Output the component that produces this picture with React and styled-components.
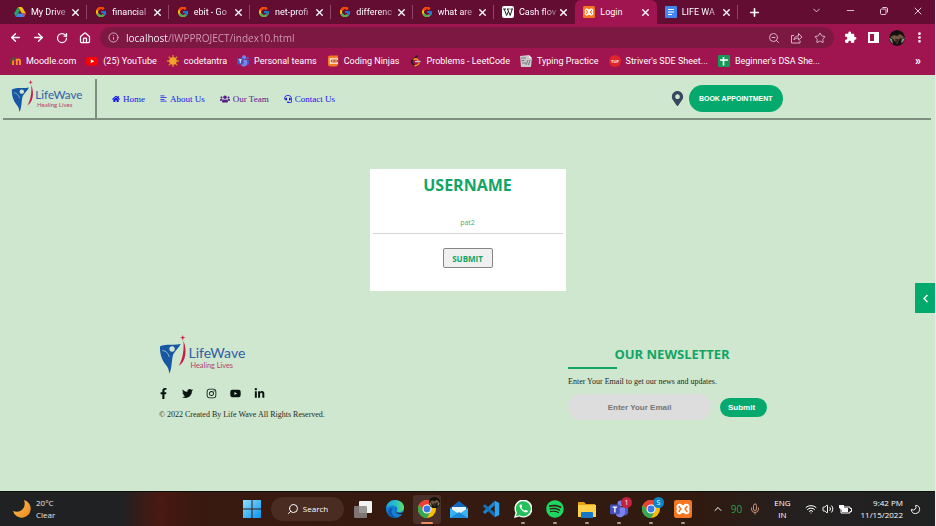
import React from "react";
import styled, { createGlobalStyle, css } from "styled-components";
import { FcGoogle } from "react-icons/fc";
import { MdExtension } from "react-icons/md";
import {
  FaHome,
  FaAlignLeft,
  FaUsers,
  FaHeadset,
  FaMapMarkerAlt,
  FaFacebookF,
  FaTwitter,
  FaInstagram,
  FaYoutube,
  FaLinkedinIn,
  FaChevronLeft,
  FaSpotify,
} from "react-icons/fa";
import {
  X,
  Plus,
  ChevronDown,
  ChevronUp,
  Minus,
  ArrowLeft,
  ArrowRight,
  RotateCw,
  House,
  Info,
  ZoomOut,
  Star,
  EllipsisVertical,
  Search,
  Mic,
  Wifi,
  Volume2,
  Moon,
} from "lucide-react";

const uiFont = '"Open Sans", "Noto Sans", sans-serif';
const compactFont = 'Roboto, "Noto Sans", sans-serif';
const green = "#04aa6d";

const GlobalStyle = createGlobalStyle`
  *, *::before, *::after { box-sizing: border-box; }
  body { margin: 0; background: #cfe6cf; }
  button, input { font: inherit; margin: 0; }
  svg { display: block; flex: none; }
`;

const Screen = styled.div`
  display: flex;
  flex-direction: column;
  min-height: 100vh;
  overflow-x: hidden;
  border-right: 1px solid #f1e6ea;
  font-family: ${uiFont};
  font-size: 10px;
`;

/* Browser chrome */

const TabStrip = styled.div`
  display: flex;
  align-items: stretch;
  height: 24px;
  padding-left: 6px;
  background: #640d33;
  color: #fff;
  font-family: ${compactFont};
  font-size: 9px;
`;

const TabList = styled.div`
  display: flex;
  flex: 0 1 732px;
  min-width: 0;
`;

const Tab = styled.div`
  display: flex;
  flex: 1 1 0;
  align-items: center;
  min-width: 0;
  padding: 0 6px 0 8px;
  position: relative;
  ${(p) =>
    p.$active
      ? css`
          background: #a01450;
          border-radius: 6px 6px 0 0;
        `
      : css`
          &::after {
            content: "";
            position: absolute;
            right: 0;
            top: 5px;
            width: 1px;
            height: 14px;
            background: ${p.$divider ? "#8f4765" : "transparent"};
          }
        `}
`;

const PlainButton = styled.button`
  display: flex;
  align-items: center;
  justify-content: center;
  padding: 0;
  border: 0;
  background: none;
  color: inherit;
`;

const TabButton = styled(PlainButton)`
  flex: 1;
  min-width: 0;
  justify-content: flex-start;
  gap: 5px;
`;

const TabLabel = styled.span`
  flex: 1;
  min-width: 0;
  text-align: left;
  white-space: nowrap;
  line-height: 16px;
  ${(p) => p.$fade && css`mask-image: linear-gradient(90deg, #000 60%, rgba(0, 0, 0, 0.25) 100%);`}
`;

const NewTab = styled(PlainButton)`
  width: 32px;
`;

const WindowControls = styled.div`
  display: flex;
  margin-left: auto;
  align-items: center;
  padding-bottom: 3px;
  color: #e2cbd5;
`;

const WindowButton = styled(PlainButton)`
  width: 34px;
  height: 20px;
`;

const Toolbar = styled.div`
  display: flex;
  align-items: center;
  height: 27px;
  padding: 0 4px;
  background: #a01450;
  color: #fff;
`;

const ToolButton = styled(PlainButton)`
  width: 23px;
  height: 20px;
`;

const AddressBar = styled.label`
  display: flex;
  flex: 1;
  align-items: center;
  height: 21px;
  margin: 0 5px 0 4px;
  padding: 0 3px 0 8px;
  border-radius: 11px;
  background: #7d1843;
  color: #d9b3c4;
`;

const AddressInput = styled.input`
  flex: 1;
  min-width: 0;
  padding: 0 0 0 7px;
  border: 0;
  outline: 0;
  font-size: 10px;
  line-height: 16px;
  color: transparent;
  background: linear-gradient(90deg, #fff 49px, #d3a0b6 49px);
  background-clip: text;
  -webkit-background-clip: text;
`;

const Avatar = styled.span`
  width: 16px;
  height: 16px;
  border-radius: 50%;
  overflow: hidden;
`;

const BookmarkBar = styled.nav`
  display: flex;
  align-items: center;
  gap: 10px;
  height: 24px;
  padding: 0 14px 4px 9px;
  background: #a01450;
  color: #fff;
  font-family: ${compactFont};
  font-size: 9px;
  white-space: nowrap;
`;

const Bookmark = styled.a`
  display: flex;
  align-items: center;
  gap: 5px;
  color: inherit;
  text-decoration: none;
  line-height: 16px;
`;

const MoreBookmarks = styled(PlainButton)`
  margin-left: auto;
  font-size: 12px;
  font-weight: 700;
`;

/* Page */

const Page = styled.div`
  position: relative;
  flex: 1;
  display: flex;
  flex-direction: column;
  background: #cfe6cf;
  font-family: "Liberation Serif", serif;
`;

const SiteHeader = styled.header`
  display: flex;
  align-items: center;
  height: 45px;
  margin: 0 4px 0 3px;
  padding-top: 4px;
  border-bottom: 2px solid #7e8f7f;
`;

const HeaderLogo = styled.a`
  display: flex;
  align-items: center;
  align-self: stretch;
  padding: 0 12px 4px 8px;
  border-right: 2px solid #7e8f7f;
`;

const SiteNav = styled.nav`
  display: flex;
  gap: 15px;
  padding-left: 15px;
`;

const NavLink = styled.a`
  display: flex;
  align-items: center;
  gap: 3px;
  font-size: 9px;
  line-height: 12px;
  color: ${(p) => (p.$visited ? "#551a8b" : "#1414ee")};
  text-decoration: none;
`;

const Booking = styled.div`
  display: flex;
  align-items: center;
  gap: 4px;
  margin-left: auto;
  margin-right: 16%;
  color: #34495e;
`;

const BookButton = styled.button`
  height: 27px;
  padding: 0 10px;
  border: 0;
  border-radius: 14px;
  background: ${green};
  color: #fff;
  font: bold 7px "Liberation Sans", sans-serif;
`;

const LoginCard = styled.form`
  display: flex;
  flex-direction: column;
  align-items: center;
  align-self: center;
  width: 196px;
  margin-top: 49px;
  padding: 4px 3px 23px;
  background: #fff;
  color: #11a566;
  font-family: ${uiFont};
`;

const CardTitle = styled.label`
  font-size: 16px;
  font-weight: 700;
  line-height: 24px;
`;

const UserInput = styled.input`
  width: 100%;
  height: 23px;
  margin-top: 14px;
  padding: 0;
  border: 0;
  border-bottom: 1px solid #d3d8d3;
  outline: 0;
  background: none;
  color: #3fae72;
  font-size: 7px;
  text-align: center;
`;

const CardSubmit = styled.button`
  width: 50px;
  height: 20px;
  margin-top: 14px;
  padding: 0;
  border: 1px solid #858585;
  border-radius: 2px;
  background: #efefef;
  color: #11a566;
  font-size: 8px;
  font-weight: 700;
`;

const SideToggle = styled.button`
  position: absolute;
  right: 0;
  top: 208px;
  display: flex;
  align-items: center;
  justify-content: center;
  width: 20px;
  height: 30px;
  padding: 0;
  border: 0;
  background: ${green};
  color: #fff;
`;

const SiteFooter = styled.footer`
  display: flex;
  justify-content: space-between;
  margin-top: 44px;
  padding: 0 17% 24px;
  color: #1d2b22;
`;

const FooterBrand = styled.div`
  display: flex;
  flex-direction: column;
`;

const SocialRow = styled.div`
  display: flex;
  align-items: center;
  gap: 13px;
  margin: 14px 0 0 -1px;
  color: #0a1410;
`;

const SocialLink = styled.a`
  color: inherit;
`;

const SmallText = styled.p`
  margin: ${(p) => p.$top}px 0 0;
  font-size: 8px;
  line-height: 12px;
`;

const Newsletter = styled.form`
  flex: 0 0 208px;
  padding-top: 9px;
`;

const NewsTitle = styled.h2`
  margin: 0;
  font: 700 13px/20px ${uiFont};
  text-align: center;
  color: #11a566;
`;

const TitleRule = styled.div`
  width: 49px;
  height: 2px;
  margin-top: 3px;
  background: #11a566;
`;

const NewsRow = styled.div`
  display: flex;
  align-items: center;
  gap: 9px;
  margin-top: 6px;
`;

const EmailInput = styled.input`
  width: 143px;
  height: 26px;
  padding: 0 8px;
  border: 0;
  border-radius: 13px;
  background: #dddddd;
  font: bold 8px "Liberation Sans", sans-serif;
  text-align: center;
  &::placeholder { color: #757575; }
`;

const NewsSubmit = styled.button`
  width: 47px;
  height: 19px;
  padding: 0 4px 0 0;
  border: 0;
  border-radius: 10px;
  background: ${green};
  color: #fff;
  font: bold 8px "Liberation Sans", sans-serif;
`;

/* Taskbar */

const Taskbar = styled.footer`
  display: grid;
  grid-template-columns: 1fr auto 1fr;
  align-items: center;
  height: 35px;
  border-top: 1px solid #101010;
  background: linear-gradient(90deg, #202122 0 13%, #4a1811 17%, #38190f 21%, #351a10 45%, #301a10 75%, #242020 85%, #202122 100%);
  color: #fff;
  font-size: 8px;
  line-height: 12px;
`;

const Weather = styled.div`
  display: flex;
  align-items: center;
  gap: 5px;
  padding-left: 13px;
  color: #e8e8e8;
`;

const AppRow = styled.div`
  display: flex;
  align-items: center;
  gap: 4px;
`;

const AppButton = styled(PlainButton)`
  position: relative;
  width: 28px;
  height: 29px;
  border-radius: 3px;
  background: ${(p) => (p.$active ? "#4b3029" : "none")};
  &::after {
    content: "";
    position: absolute;
    bottom: 0;
    left: 50%;
    width: ${(p) => (p.$active ? 12 : 4)}px;
    height: 2px;
    border-radius: 1px;
    transform: translateX(-50%);
    background: ${(p) => (p.$active ? "#ef8b62" : p.$open ? "#a39a96" : "transparent")};
  }
`;

const Badge = styled.span`
  position: absolute;
  top: 2px;
  right: 1px;
  width: 11px;
  height: 11px;
  border-radius: 50%;
  background: ${(p) => p.$color};
  color: #fff;
  font-size: 7px;
  line-height: 11px;
  overflow: hidden;
`;

const SearchButton = styled(PlainButton)`
  width: 73px;
  height: 24px;
  margin: 0 1px;
  gap: 4px;
  border-radius: 12px;
  background: #4a2c23;
  font-size: 8px;
`;

const Mirrored = styled.span`
  transform: scaleX(-1);
`;

const Tray = styled.div`
  display: flex;
  align-items: center;
  justify-content: flex-end;
  gap: 7px;
  padding-right: 14px;
`;

const TrayText = styled.div`
  text-align: ${(p) => p.$align || "center"};
  white-space: nowrap;
`;

const TrayStat = styled.span`
  color: #23a244;
  font-size: 10px;
`;

const StatusGroup = styled.div`
  display: flex;
  align-items: center;
  gap: 5px;
  margin: 0 2px 0 7px;
`;

const TrayGroup = styled.div`
  display: flex;
  align-items: center;
  gap: 7px;
  margin-right: 6px;
`;

/* Drawings */

const DriveIcon = () => (
  <svg width="12" height="12" viewBox="0 0 24 24">
    <path d="M8 2h8l8 13h-8z" fill="#fbbc04" />
    <path d="M8 2l4 7L4 22 0 15z" fill="#1ea362" />
    <path d="M8 15h16l-4 7H4z" fill="#4285f4" />
    <path d="M17 15h7l-4 7z" fill="#ea4335" />
  </svg>
);

const WikiIcon = () => (
  <svg width="12" height="12" viewBox="0 0 12 12">
    <rect width="12" height="12" rx="2" fill="#fff" />
    <path d="M1 3h3M5 3h2.500M8.500 3H11M2.200 3l2.400 6.500L6.300 5.500M5.500 3l2.700 6.500L10.200 3" fill="none" stroke="#222" strokeWidth="1" />
  </svg>
);

const XamppIcon = ({ size }) => (
  <svg width={size} height={size} viewBox="0 0 24 24">
    <rect width="24" height="24" rx="3" fill="#f37623" />
    <path d="M8 8c4 0 4 8 8 8M16 8c-4 0-4 8-8 8" fill="none" stroke="#fff" strokeWidth="2.500" />
    <path d="M10 7.500C9 5.500 4.500 6 4.500 9c0 2 1.500 3 3 3-1.500 0-3 1-3 3 0 3 4.500 3.500 5.500 1.500M14 7.500c1-2 5.500-1.500 5.500 1.500 0 2-1.500 3-3 3 1.500 0 3 1 3 3 0 3-4.500 3.500-5.500 1.500M9 8h6M9 16h6" fill="none" stroke="#fff" strokeWidth="2.500" />
  </svg>
);

const DocsIcon = () => (
  <svg width="12" height="12" viewBox="0 0 12 12">
    <rect width="12" height="12" rx="1" fill="#4285f4" />
    <path d="M3 3.500h6M3 6h6M3 8.500h4" stroke="#fff" strokeWidth="1.200" />
  </svg>
);

const SheetIcon = () => (
  <svg width="12" height="12" viewBox="0 0 12 12">
    <rect width="12" height="12" rx="1" fill="#159a56" />
    <path d="M2 5h8M5.500 2v8.500" stroke="#fff" strokeWidth="1.600" />
  </svg>
);

const MoodleIcon = () => (
  <svg width="12" height="12" viewBox="0 0 12 12">
    <path d="M4 10V6a1.900 1.900 0 0 1 3.800 0v4M7.800 10V6a1.600 1.600 0 0 1 3.200 0v4" fill="none" stroke="#f7931e" strokeWidth="1.900" />
    <path d="M0 5l5-3 2 2-5 1.500zM1.500 5v5" fill="#63453f" stroke="#63453f" />
  </svg>
);

const YouTubeIcon = () => (
  <svg width="12" height="12" viewBox="0 0 12 12">
    <rect y="2" width="12" height="8.500" rx="2.200" fill="#f00" />
    <path d="M4.800 4.300v4l3.400-2z" fill="#fff" />
  </svg>
);

const SunIcon = () => (
  <svg width="12" height="12" viewBox="0 0 12 12">
    <path d="M6 0v12M0 6h12M1.800 1.800l8.400 8.400M10.200 1.800L1.800 10.200" stroke="#d9861c" strokeWidth="1.400" />
    <circle cx="6" cy="6" r="3.700" fill="#f0a22a" />
  </svg>
);

const TeamsIcon = ({ size }) => (
  <svg width={size} height={size} viewBox="0 0 24 24">
    <circle cx="14" cy="4.500" r="4" fill="#7b83eb" />
    <circle cx="21" cy="6" r="2.700" fill="#5059c9" />
    <path d="M17 10h7v7a4 4 0 0 1-6 3z" fill="#5059c9" />
    <path d="M8 9.500h12V17a6.500 6.500 0 0 1-12 3z" fill="#7b83eb" />
    <rect y="6" width="13" height="13" rx="1.500" fill="#4651b8" />
    <path d="M3.500 9.500h6M6.500 9.500v7" stroke="#fff" strokeWidth="1.800" />
  </svg>
);

const NinjaIcon = () => (
  <svg width="12" height="12" viewBox="0 0 13 12">
    <path d="M1 3a3 3 0 0 1 3-3h8v9a3 3 0 0 1-3 3H4a3 3 0 0 1-3-3z" fill="#f47b20" />
    <path d="M3 3h9v6H3z" fill="#fff3e6" />
    <rect x="4" y="4.500" width="8" height="3.200" rx="1.500" fill="#c4511a" />
    <path d="M5.500 6h1.500M9 6h1.500" stroke="#fff" strokeWidth="1.300" />
  </svg>
);

const LeetIcon = () => (
  <svg width="12" height="12" viewBox="0 0 24 24" fill="none" strokeWidth="3" strokeLinecap="round">
    <path d="M14 2L4 12" stroke="#1f1a17" />
    <path d="M18 17l-3 3c-2 2-5 2-7 0l-4-4c-2-2-1-4 0-5" stroke="#1f1a17" />
    <path d="M8 9c3-3 5-2 8 1" stroke="#ffa116" />
    <path d="M11 13h9" stroke="#c9c9c9" />
    <path d="M10 21c2 1 4 0 8-4" stroke="#ffa116" />
  </svg>
);

const TypingIcon = () => (
  <svg width="12" height="12" viewBox="0 0 12 12">
    <path d="M0 1l9-1v3h3l-1 9H1z" fill="#c9c9cb" />
    <path d="M1 3h5M1.500 5.500h3M2 8h4M8 5l-2 5M10 5L8.500 10" stroke="#77777c" />
    <path d="M9 0l3 3H9z" fill="#f4f4f4" />
  </svg>
);

const TufIcon = () => (
  <svg width="12" height="12" viewBox="0 0 12 12">
    <circle cx="6" cy="6" r="6" fill="#e0242c" />
    <text x="6" y="7.500" textAnchor="middle" fontFamily="Liberation Sans" fontSize="4" fontWeight="700" fill="#fff">TUF</text>
  </svg>
);

const ShareIcon = () => (
  <svg width="13" height="12" viewBox="0 0 13 12" fill="none" stroke="currentColor">
    <path d="M4 3.500H1.500v7.500h8.500V8.500M4 8c0-3 2-4 4.500-4V1.500L12 5 8.500 8V6C6.500 6 5 6.500 4 8z" strokeLinejoin="round" />
  </svg>
);

const PanelIcon = () => (
  <svg width="11" height="11" viewBox="0 0 11 11">
    <path d="M0 0h11v11H0zM2 2v7h4V2z" fill="#fff" fillRule="evenodd" />
  </svg>
);

const RestoreIcon = () => (
  <svg width="8" height="8" viewBox="0 0 8 8" fill="none" stroke="currentColor">
    <rect x=".5" y="2" width="5.500" height="5.500" rx="1" />
    <path d="M2.500 .5H6A1.500 1.500 0 0 1 7.500 2v3.500" />
  </svg>
);

const Portrait = ({ size }) => (
  <svg width={size} height={size} viewBox="0 0 16 16">
    <circle cx="8" cy="8" r="8" fill="#15100d" />
    <path d="M1 7l4-2 3 1 3-2 4 3-2 2-2-1-1 3-2-2-2 3-2-3z" fill="#6e5842" />
    <path d="M0 8l3 1 1 5-2-2zM16 8l-3 1-1 4 2-1z" fill="#7d9a80" />
    <path d="M6 9h4l-1 5H7z" fill="#3d2a20" />
  </svg>
);

const ChromeIcon = () => (
  <svg width="18" height="18" viewBox="0 0 24 24">
    <circle cx="12" cy="12" r="12" fill="#fbbc04" />
    <path d="M1.600 6A12 12 0 0 1 22.400 6H12L6.800 15z" fill="#ea4335" />
    <path d="M1.600 6A12 12 0 0 0 12 24l5.200-9H6.800z" fill="#34a853" />
    <circle cx="12" cy="12" r="6" fill="#fff" />
    <circle cx="12" cy="12" r="4.600" fill="#3b78e7" />
  </svg>
);

const EdgeIcon = () => (
  <svg width="18" height="18" viewBox="0 0 24 24">
    <defs>
      <linearGradient id="edgeTop" x1="0" x2="1">
        <stop offset="0" stopColor="#1aa3df" />
        <stop offset=".6" stopColor="#2cc6c0" />
        <stop offset="1" stopColor="#67df5a" />
      </linearGradient>
    </defs>
    <circle cx="12" cy="12" r="12" fill="#1580d6" />
    <path d="M0 11C1 4 6 0 12 0c8 0 12 5 12 10 0 4-3 6-6 6-4 0-4-2-3-3 2-5-8-9-15-2z" fill="url(#edgeTop)" />
    <path d="M9 11c-4 5 0 12 7 12-6 2-12-1-13-7 0-4 3-6 6-5z" fill="#0c59ac" />
    <path d="M14 9.500c-3 2-2 7 3 8 3 0 5-1 6.500-2l-1.500 3c-7 2-12-3-8-9z" fill="#301a10" />
  </svg>
);

const VsCodeIcon = () => (
  <svg width="18" height="18" viewBox="0 0 24 24">
    <path d="M17 1l6 3v16l-6 3z" fill="#2fa3ee" />
    <path d="M17 1v6L4 18.500l-3-2.500z" fill="#1a86d3" />
    <path d="M17 23v-6L4 5.500 1 8z" fill="#1272ba" />
  </svg>
);

const WindowsIcon = () => (
  <svg width="18" height="18" viewBox="0 0 18 18">
    <defs>
      <linearGradient id="win" x2="1" y2="1">
        <stop offset="0" stopColor="#8be0fd" />
        <stop offset="1" stopColor="#0a93ee" />
      </linearGradient>
    </defs>
    <path d="M0 0h8.500v8.500H0zM9.500 0H18v8.500H9.500zM0 9.500h8.500V18H0zM9.500 9.500H18V18H9.500z" fill="url(#win)" />
  </svg>
);

const TaskViewIcon = () => (
  <svg width="18" height="17" viewBox="0 0 18 17">
    <rect x="5" width="13" height="12" rx="1" fill="#f2f2f2" />
    <rect y="5" width="13" height="12" rx="1" fill="#8b8785" fillOpacity=".85" />
  </svg>
);

const MailIcon = () => (
  <svg width="18" height="17" viewBox="0 0 18 17">
    <path d="M0 7l9-7 9 7v10H0z" fill="#1267b8" />
    <path d="M2 6h14v6H2z" fill="#e9f5fd" />
    <path d="M0 7l9 6 9-6v10H0z" fill="#39b2f2" />
    <path d="M0 17l9-6 9 6z" fill="#1c8ad8" />
  </svg>
);

const FolderIcon = () => (
  <svg width="18" height="17" viewBox="0 0 18 17">
    <path d="M0 1h6l2 2h9v13H0z" fill="#e5a012" />
    <path d="M0 4h18v12H0z" fill="#ffd04a" />
    <path d="M3 12q0-1 1-1h10q1 0 1 1v5H3z" fill="#1777c4" />
  </svg>
);

const WhatsAppIcon = () => (
  <svg width="18" height="18" viewBox="0 0 24 24">
    <path d="M0 24L2 17A12 12 0 1 1 7 22z" fill="#fff" />
    <path d="M2.500 21.500L4 17A10 10 0 1 1 7.500 20.300z" fill="#25c05a" />
    <path d="M8 6c-3 3 5 13 10 10 1-1 0-2 0-2l-3-1-1 1c-2 0-4-3-4-4l1-1-1-3z" fill="#fff" />
  </svg>
);

const WeatherMoon = () => (
  <svg width="18" height="18" viewBox="0 0 18 18">
    <defs>
      <linearGradient id="moonFill" x2="1" y2="1">
        <stop offset="0" stopColor="#ffc45c" />
        <stop offset="1" stopColor="#ed861c" />
      </linearGradient>
    </defs>
    <path d="M11 0a9 9 0 1 1-11 11C7 14 14 8 11 0z" fill="url(#moonFill)" />
  </svg>
);

const BatteryIcon = () => (
  <svg width="13" height="11" viewBox="0 0 13 11">
    <path d="M2 3h9v1.500h1.500v3H11V9H2z" fill="none" stroke="#fff" />
    <path d="M3 4h6v4H3zM0 1h5v3L3 6 0 4z" fill="#fff" />
  </svg>
);

const LifeWaveLogo = ({ width }) => (
  <svg width={width} viewBox="0 0 260 117" role="img" aria-label="LifeWave Healing Lives">
    <path d="M3 34C22 25 45 32 65 27C60 38 49 46 43 57C37 71 40 97 31 116C29 103 27 96 20 89C8 75 2 55 3 34Z" fill="#1857a4" />
    <path d="M10 46C21 47 28 55 31 66" fill="none" stroke="#cfe6cf" strokeWidth="2" />
    <circle cx="39" cy="42" r="8" fill="#cfe6cf" />
    <path d="M73 17C85 47 80 80 59 92C72 70 75 43 73 17Z" fill="#c51f48" />
    <path d="M71 0l2 6 6 2-6 2-2 7-2-7-6-2 6-2z" fill="#c51f48" />
    <text x="88" y="68" fontFamily="Lato, sans-serif" fontSize="42" fill="#315fa5">LifeWave</text>
    <text x="94" y="99" fontFamily="Lato, sans-serif" fontSize="22" fill="#b5446a">Healing Lives</text>
  </svg>
);

/* Content */

const tabs = [
  { title: "My Drive", icon: <DriveIcon /> },
  { title: "financial", icon: <FcGoogle size={12} /> },
  { title: "ebit - Go", icon: <FcGoogle size={12} /> },
  { title: "net-profi", icon: <FcGoogle size={12} /> },
  { title: "differenc", icon: <FcGoogle size={12} /> },
  { title: "what are", icon: <FcGoogle size={12} /> },
  { title: "Cash flov", icon: <WikiIcon /> },
  { title: "Login", icon: <XamppIcon size={12} />, active: true },
  { title: "LIFE WA", icon: <DocsIcon /> },
];

const bookmarks = [
  ["Moodle.com", <MoodleIcon />],
  ["(25) YouTube", <YouTubeIcon />],
  ["codetantra", <SunIcon />],
  ["Personal teams", <TeamsIcon size={12} />],
  ["Coding Ninjas", <NinjaIcon />],
  ["Problems - LeetCode", <LeetIcon />],
  ["Typing Practice", <TypingIcon />],
  ["Striver's SDE Sheet...", <TufIcon />],
  ["Beginner's DSA She...", <SheetIcon />],
];

const navLinks = [
  { name: "Home", Icon: FaHome, size: 8 },
  { name: "About Us", Icon: FaAlignLeft, size: 7 },
  { name: "Our Team", Icon: FaUsers, size: 10, visited: true },
  { name: "Contact Us", Icon: FaHeadset, size: 8 },
];

const socials = [
  ["Facebook", FaFacebookF],
  ["Twitter", FaTwitter],
  ["Instagram", FaInstagram],
  ["YouTube", FaYoutube],
  ["LinkedIn", FaLinkedinIn],
];

const apps = [
  { name: "Task view", icon: <TaskViewIcon /> },
  { name: "Edge", icon: <EdgeIcon /> },
  { name: "Chrome", icon: <ChromeIcon />, active: true, badge: <Portrait size={11} />, color: "#15100d" },
  { name: "Mail", icon: <MailIcon /> },
  { name: "VS Code", icon: <VsCodeIcon /> },
  { name: "WhatsApp", icon: <WhatsAppIcon />, open: true },
  { name: "Spotify", icon: <FaSpotify size={18} color="#1ed760" />, open: true },
  { name: "Explorer", icon: <FolderIcon />, open: true },
  { name: "Teams", icon: <TeamsIcon size={18} />, open: true, badge: "1", color: "#c4223e" },
  { name: "Chrome profile", icon: <ChromeIcon />, open: true, badge: "S", color: "#0b87c9" },
  { name: "XAMPP", icon: <XamppIcon size={18} />, open: true },
];

function BrowserChrome() {
  return (
    <div>
      <TabStrip>
        <TabList>
          {tabs.map((t, i) => (
            <Tab key={t.title} $active={t.active} $divider={i !== 6}>
              <TabButton>
                {t.icon}
                <TabLabel $fade={!t.active}>{t.title}</TabLabel>
              </TabButton>
              <PlainButton aria-label="Close tab">
                <X size={11} strokeWidth={3} />
              </PlainButton>
            </Tab>
          ))}
        </TabList>
        <NewTab aria-label="New tab"><Plus size={13} strokeWidth={3} /></NewTab>
        <WindowControls>
          <WindowButton aria-label="Search tabs"><ChevronDown size={11} /></WindowButton>
          <WindowButton aria-label="Minimize"><Minus size={11} /></WindowButton>
          <WindowButton aria-label="Restore"><RestoreIcon /></WindowButton>
          <WindowButton aria-label="Close"><X size={12} /></WindowButton>
        </WindowControls>
      </TabStrip>
      <Toolbar>
        <ToolButton aria-label="Back"><ArrowLeft size={13} strokeWidth={2.5} /></ToolButton>
        <ToolButton aria-label="Forward"><ArrowRight size={13} strokeWidth={2.5} /></ToolButton>
        <ToolButton aria-label="Reload"><RotateCw size={12} strokeWidth={2.5} /></ToolButton>
        <ToolButton aria-label="Home page"><House size={12} strokeWidth={2.5} /></ToolButton>
        <AddressBar>
          <Info size={11} />
          <AddressInput aria-label="Address" defaultValue="localhost/IWPPROJECT/index10.html" />
          <ToolButton aria-label="Zoom"><ZoomOut size={12} /></ToolButton>
          <ToolButton aria-label="Share"><ShareIcon /></ToolButton>
          <ToolButton aria-label="Bookmark"><Star size={12} /></ToolButton>
        </AddressBar>
        <ToolButton aria-label="Extensions"><MdExtension size={13} /></ToolButton>
        <ToolButton aria-label="Side panel"><PanelIcon /></ToolButton>
        <ToolButton aria-label="Profile"><Avatar><Portrait size={16} /></Avatar></ToolButton>
        <ToolButton aria-label="Menu"><EllipsisVertical size={13} strokeWidth={3} /></ToolButton>
      </Toolbar>
      <BookmarkBar>
        {bookmarks.map(([name, icon]) => (
          <Bookmark key={name} href="#">{icon}{name}</Bookmark>
        ))}
        <MoreBookmarks>»</MoreBookmarks>
      </BookmarkBar>
    </div>
  );
}

function SitePage() {
  return (
    <Page>
      <SiteHeader>
        <HeaderLogo href="#"><LifeWaveLogo width={72} /></HeaderLogo>
        <SiteNav>
          {navLinks.map(({ name, Icon, size, visited }) => (
            <NavLink key={name} href="#" $visited={visited}><Icon size={size} />{name}</NavLink>
          ))}
        </SiteNav>
        <Booking>
          <FaMapMarkerAlt size={15} />
          <BookButton>BOOK APPOINTMENT</BookButton>
        </Booking>
      </SiteHeader>
      <LoginCard onSubmit={(e) => e.preventDefault()}>
        <CardTitle htmlFor="username">USERNAME</CardTitle>
        <UserInput id="username" defaultValue="pat2" />
        <CardSubmit>SUBMIT</CardSubmit>
      </LoginCard>
      <SideToggle aria-label="Open panel"><FaChevronLeft size={9} /></SideToggle>
      <SiteFooter>
        <FooterBrand>
          <LifeWaveLogo width={87} />
          <SocialRow>
            {socials.map(([name, Icon]) => (
              <SocialLink key={name} href="#" aria-label={name}><Icon size={11} /></SocialLink>
            ))}
          </SocialRow>
          <SmallText $top={10}>© 2022 Created By Life Wave All Rights Reserved.</SmallText>
        </FooterBrand>
        <Newsletter onSubmit={(e) => e.preventDefault()}>
          <NewsTitle>OUR NEWSLETTER</NewsTitle>
          <TitleRule />
          <SmallText $top={7}>Enter Your Email to get our news and updates.</SmallText>
          <NewsRow>
            <EmailInput type="email" aria-label="Email" placeholder="Enter Your Email" />
            <NewsSubmit>Submit</NewsSubmit>
          </NewsRow>
        </Newsletter>
      </SiteFooter>
    </Page>
  );
}

function SystemTaskbar() {
  return (
    <Taskbar>
      <Weather>
        <WeatherMoon />
        <div>20°C<br />Clear</div>
      </Weather>
      <AppRow>
        <AppButton aria-label="Start"><WindowsIcon /></AppButton>
        <SearchButton><Mirrored><Search size={12} /></Mirrored>Search</SearchButton>
        {apps.map((a) => (
          <AppButton key={a.name} aria-label={a.name} $active={a.active} $open={a.open}>
            {a.icon}
            {a.badge && <Badge $color={a.color}>{a.badge}</Badge>}
          </AppButton>
        ))}
      </AppRow>
      <Tray>
        <TrayGroup>
          <ChevronUp size={12} />
          <TrayStat>90</TrayStat>
          <Mic size={12} color="#c98f74" />
        </TrayGroup>
        <TrayText>ENG<br />IN</TrayText>
        <StatusGroup>
          <Wifi size={12} />
          <Volume2 size={12} />
          <BatteryIcon />
        </StatusGroup>
        <TrayText $align="right">9:42 PM<br />11/15/2022</TrayText>
        <Mirrored><Moon size={11} /></Mirrored>
      </Tray>
    </Taskbar>
  );
}

export default function App() {
  return (
    <Screen>
      <GlobalStyle />
      <BrowserChrome />
      <SitePage />
      <SystemTaskbar />
    </Screen>
  );
}
